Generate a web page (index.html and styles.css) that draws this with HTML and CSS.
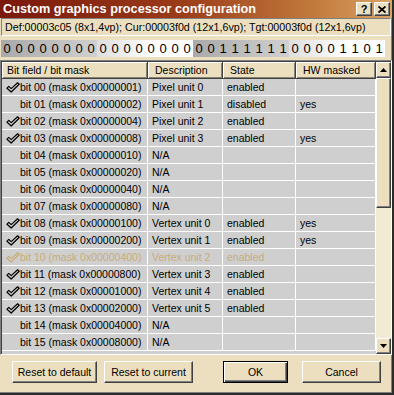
FILE: index.html
```html
<!DOCTYPE html>
<html>
<head>
<meta charset="utf-8">
<link rel="stylesheet" href="styles.css">
</head>
<body>
<div class="window">
  <div class="titlebar">
    <span class="title">Custom graphics processor configuration</span>
    <div class="tb-buttons">
      <span class="tb-btn">?</span>
      <span class="tb-btn"><svg width="8" height="7" viewBox="0 0 8 7"><path d="M0.5 0.5 L7.5 6.5 M7.5 0.5 L0.5 6.5" stroke="#000" stroke-width="1.8"/></svg></span>
    </div>
  </div>
  <div class="info">Def:00003c05 (8x1,4vp); Cur:00003f0d (12x1,6vp); Tgt:00003f0d (12x1,6vp)</div>
  <div class="bits">
    <div class="group g-dark"><span>0</span><span>0</span><span>0</span><span>0</span><span>0</span><span>0</span><span>0</span><span>0</span></div>
    <div class="group g-light"><span>0</span><span>0</span><span>0</span><span>0</span><span>0</span><span>0</span><span>0</span><span>0</span></div>
    <div class="group g-dark"><span>0</span><span>0</span><span>1</span><span>1</span><span>1</span><span>1</span><span>1</span><span>1</span></div>
    <div class="group g-light"><span>0</span><span>0</span><span>0</span><span>0</span><span>1</span><span>1</span><span>0</span><span>1</span></div>
  </div>
  <div class="list">
    <div class="list-main">
      <div class="row header">
        <div class="cell first">Bit field / bit mask</div>
        <div class="cell">Description</div>
        <div class="cell">State</div>
        <div class="cell">HW masked</div>
      </div>
      <div class="row"><div class="cell bitcell"><span class="chk"><svg width="14" height="11" viewBox="0 0 14 11"><path d="M1 6.2 L2.8 4.4 L5.2 6.6 L11.6 0.8 L13.2 2.2 L5.2 10 Z" fill="none" stroke="currentColor" stroke-width="1.2" stroke-linejoin="round"/></svg></span>bit 00 (mask 0x00000001)</div><div class="cell">Pixel unit 0</div><div class="cell">enabled</div><div class="cell"></div></div>
      <div class="row"><div class="cell bitcell"><span class="chk"></span>bit 01 (mask 0x00000002)</div><div class="cell">Pixel unit 1</div><div class="cell">disabled</div><div class="cell">yes</div></div>
      <div class="row"><div class="cell bitcell"><span class="chk"><svg width="14" height="11" viewBox="0 0 14 11"><path d="M1 6.2 L2.8 4.4 L5.2 6.6 L11.6 0.8 L13.2 2.2 L5.2 10 Z" fill="none" stroke="currentColor" stroke-width="1.2" stroke-linejoin="round"/></svg></span>bit 02 (mask 0x00000004)</div><div class="cell">Pixel unit 2</div><div class="cell">enabled</div><div class="cell"></div></div>
      <div class="row"><div class="cell bitcell"><span class="chk"><svg width="14" height="11" viewBox="0 0 14 11"><path d="M1 6.2 L2.8 4.4 L5.2 6.6 L11.6 0.8 L13.2 2.2 L5.2 10 Z" fill="none" stroke="currentColor" stroke-width="1.2" stroke-linejoin="round"/></svg></span>bit 03 (mask 0x00000008)</div><div class="cell">Pixel unit 3</div><div class="cell">enabled</div><div class="cell">yes</div></div>
      <div class="row"><div class="cell bitcell"><span class="chk"></span>bit 04 (mask 0x00000010)</div><div class="cell">N/A</div><div class="cell"></div><div class="cell"></div></div>
      <div class="row"><div class="cell bitcell"><span class="chk"></span>bit 05 (mask 0x00000020)</div><div class="cell">N/A</div><div class="cell"></div><div class="cell"></div></div>
      <div class="row"><div class="cell bitcell"><span class="chk"></span>bit 06 (mask 0x00000040)</div><div class="cell">N/A</div><div class="cell"></div><div class="cell"></div></div>
      <div class="row"><div class="cell bitcell"><span class="chk"></span>bit 07 (mask 0x00000080)</div><div class="cell">N/A</div><div class="cell"></div><div class="cell"></div></div>
      <div class="row"><div class="cell bitcell"><span class="chk"><svg width="14" height="11" viewBox="0 0 14 11"><path d="M1 6.2 L2.8 4.4 L5.2 6.6 L11.6 0.8 L13.2 2.2 L5.2 10 Z" fill="none" stroke="currentColor" stroke-width="1.2" stroke-linejoin="round"/></svg></span>bit 08 (mask 0x00000100)</div><div class="cell">Vertex unit 0</div><div class="cell">enabled</div><div class="cell">yes</div></div>
      <div class="row"><div class="cell bitcell"><span class="chk"><svg width="14" height="11" viewBox="0 0 14 11"><path d="M1 6.2 L2.8 4.4 L5.2 6.6 L11.6 0.8 L13.2 2.2 L5.2 10 Z" fill="none" stroke="currentColor" stroke-width="1.2" stroke-linejoin="round"/></svg></span>bit 09 (mask 0x00000200)</div><div class="cell">Vertex unit 1</div><div class="cell">enabled</div><div class="cell">yes</div></div>
      <div class="row dim"><div class="cell bitcell"><span class="chk"><svg width="14" height="11" viewBox="0 0 14 11"><path d="M1 6.2 L2.8 4.4 L5.2 6.6 L11.6 0.8 L13.2 2.2 L5.2 10 Z" fill="none" stroke="currentColor" stroke-width="1.2" stroke-linejoin="round"/></svg></span>bit 10 (mask 0x00000400)</div><div class="cell">Vertex unit 2</div><div class="cell">enabled</div><div class="cell"></div></div>
      <div class="row"><div class="cell bitcell"><span class="chk"><svg width="14" height="11" viewBox="0 0 14 11"><path d="M1 6.2 L2.8 4.4 L5.2 6.6 L11.6 0.8 L13.2 2.2 L5.2 10 Z" fill="none" stroke="currentColor" stroke-width="1.2" stroke-linejoin="round"/></svg></span>bit 11 (mask 0x00000800)</div><div class="cell">Vertex unit 3</div><div class="cell">enabled</div><div class="cell"></div></div>
      <div class="row"><div class="cell bitcell"><span class="chk"><svg width="14" height="11" viewBox="0 0 14 11"><path d="M1 6.2 L2.8 4.4 L5.2 6.6 L11.6 0.8 L13.2 2.2 L5.2 10 Z" fill="none" stroke="currentColor" stroke-width="1.2" stroke-linejoin="round"/></svg></span>bit 12 (mask 0x00001000)</div><div class="cell">Vertex unit 4</div><div class="cell">enabled</div><div class="cell"></div></div>
      <div class="row"><div class="cell bitcell"><span class="chk"><svg width="14" height="11" viewBox="0 0 14 11"><path d="M1 6.2 L2.8 4.4 L5.2 6.6 L11.6 0.8 L13.2 2.2 L5.2 10 Z" fill="none" stroke="currentColor" stroke-width="1.2" stroke-linejoin="round"/></svg></span>bit 13 (mask 0x00002000)</div><div class="cell">Vertex unit 5</div><div class="cell">enabled</div><div class="cell"></div></div>
      <div class="row"><div class="cell bitcell"><span class="chk"></span>bit 14 (mask 0x00004000)</div><div class="cell">N/A</div><div class="cell"></div><div class="cell"></div></div>
      <div class="row"><div class="cell bitcell"><span class="chk"></span>bit 15 (mask 0x00008000)</div><div class="cell">N/A</div><div class="cell"></div><div class="cell"></div></div>
    </div>
    <div class="scrollbar">
      <div class="sb-btn"><svg width="7" height="4" viewBox="0 0 7 4"><path d="M3.5 0 L7 4 L0 4 Z" fill="#000"/></svg></div>
      <div class="sb-thumb"></div>
      <div class="sb-track"></div>
      <div class="sb-btn"><svg width="7" height="4" viewBox="0 0 7 4"><path d="M0 0 L7 0 L3.5 4 Z" fill="#000"/></svg></div>
    </div>
  </div>
  <div class="actions">
    <button class="btn w-default">Reset to default</button>
    <button class="btn w-current">Reset to current</button>
    <button class="btn btn-ok w-ok">OK</button>
    <button class="btn w-cancel">Cancel</button>
  </div>
</div>
</body>
</html>
```
FILE: styles.css
```css
* { box-sizing: border-box; }

body {
  margin: 0;
  background: #ebdfbf;
  font-family: "Liberation Sans", Arial, sans-serif;
  font-size: 10.5px;
  color: #000;
}

.window {
  width: 394px;
  height: 395px;
  background: #ebdfbf;
  border-right: 2px solid #2c2c2c;
  border-bottom: 2px solid #2c2c2c;
  box-shadow: inset -1px -1px 0 #808080;
  display: flex;
  flex-direction: column;
  overflow: hidden;
}

.titlebar {
  height: 18px;
  flex: none;
  display: flex;
  align-items: center;
  padding: 0 2px 0 3px;
  background: linear-gradient(to right, #7a180c 0%, #9a3a18 45%, #c27a3c 80%, #d9a466 100%);
}

.title {
  flex: 1;
  color: #fff;
  font-weight: bold;
  font-size: 12.7px;
  white-space: nowrap;
}

.tb-buttons {
  display: flex;
  gap: 2px;
}

.tb-btn {
  width: 16px;
  height: 14px;
  display: flex;
  align-items: center;
  justify-content: center;
  background: #ebdfbf;
  border: 1px solid;
  border-color: #fff #404040 #404040 #fff;
  box-shadow: inset -1px -1px 0 #808080;
  font-weight: bold;
  font-size: 11px;
  line-height: 1;
}

.info {
  height: 18px;
  flex: none;
  margin: 0 1px;
  padding-left: 3px;
  border: 1px solid;
  border-color: #808080 #fff #fff #808080;
  font-size: 10.7px;
  line-height: 16px;
  white-space: nowrap;
}

.bits {
  display: flex;
  height: 17px;
  flex: none;
  margin: 4px 0 0 1px;
}

.group {
  display: flex;
  width: 96px;
}

.group span {
  width: 12px;
  text-align: center;
  font-size: 13px;
  line-height: 17px;
}

.g-dark { background: linear-gradient(to right, #a9a9a9, #d0d0d0); }
.g-light { background: linear-gradient(to right, #dedede, #ffffff 60%); }

.list {
  height: 295px;
  flex: none;
  margin-top: 3px;
  display: flex;
  border: 1px solid;
  border-color: #808080 #fff #fff #808080;
  padding: 1px 0 0 1px;
  box-shadow: inset 1px 1px 0 #404040;
  background: #cfcfcf;
}

.list-main {
  width: 374px;
  flex: none;
  display: flex;
  flex-direction: column;
  overflow: hidden;
}

.row {
  display: grid;
  grid-template-columns: 146px 75px 73px 80px;
  height: 17px;
  flex: none;
}

.cell {
  border-right: 1px solid #fff;
  border-bottom: 1px solid #fff;
  line-height: 16px;
  padding-left: 4px;
  white-space: nowrap;
  overflow: hidden;
}

.header .cell {
  background: #ebdfbf;
  border-right-color: #404040;
  border-bottom-color: #404040;
  box-shadow: inset 1px 1px 0 #fff, inset -1px -1px 0 #8a8270;
  padding-left: 7px;
}

.header .cell.first { padding-left: 5px; }

.bitcell {
  display: flex;
  align-items: center;
  padding-left: 3px;
}

.chk {
  width: 15px;
  height: 16px;
  flex: none;
  display: flex;
  align-items: center;
  padding-left: 1px;
}

.dim { color: #c8ac78; }

.scrollbar {
  width: 15px;
  flex: none;
  display: flex;
  flex-direction: column;
  background: #f3ead4;
}

.sb-btn {
  height: 16px;
  flex: none;
  display: flex;
  align-items: center;
  justify-content: center;
  background: #ebdfbf;
  border: 1px solid;
  border-color: #fff #404040 #404040 #fff;
  box-shadow: inset -1px -1px 0 #808080;
}

.sb-thumb {
  height: 130px;
  flex: none;
  background: #ebdfbf;
  border: 1px solid;
  border-color: #fff #404040 #404040 #fff;
  box-shadow: inset -1px -1px 0 #808080;
}

.sb-track { flex: 1; }

.actions {
  display: flex;
  margin-top: 6px;
  padding-left: 12px;
  height: 22px;
  flex: none;
}

.btn {
  height: 22px;
  padding: 0;
  background: #ebdfbf;
  border: 1px solid;
  border-color: #fff #404040 #404040 #fff;
  box-shadow: inset -1px -1px 0 #808080;
  font-family: "Liberation Sans", Arial, sans-serif;
  font-size: 10.5px;
  color: #000;
  text-align: center;
}

.btn-ok {
  border: 1px solid #000;
  box-shadow: inset 1px 1px 0 #fff, inset -1px -1px 0 #404040, inset -2px -2px 0 #808080;
}

.w-default { width: 85px; }
.w-current { width: 89px; margin-left: 7px; }
.w-ok { width: 65px; margin-left: 30px; }
.w-cancel { width: 79px; margin-left: 14px; }
```
